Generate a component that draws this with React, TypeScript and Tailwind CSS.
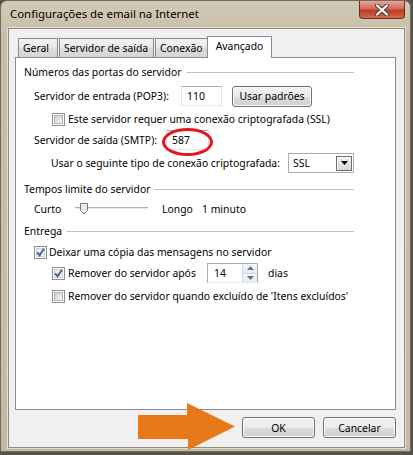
import React from 'react'
import clsx from 'clsx'

const Check = ({ checked = false }: { checked?: boolean }) => (
  <span className="relative flex h-[13px] w-[13px] shrink-0 items-center justify-center border border-[#8e8f8f] bg-white">
    <span
      className={clsx(
        'h-[9px] w-[9px] border',
        checked
          ? 'border-[#c9ced6] bg-[linear-gradient(135deg,#e6e9ee,#fbfbfb)]'
          : 'border-[#aeb3b9] bg-[linear-gradient(135deg,#cbcfd5,#f7f7f7)]'
      )}
    />
    {checked && (
      <svg className="absolute left-0 top-0" width="11" height="11" viewBox="0 0 11 11">
        <path d="M2.2 5.4 L4.6 8.3 L8.9 1.8" fill="none" stroke="#4a5f8f" strokeWidth="1.9" />
      </svg>
    )}
  </span>
)

const GroupHeader = ({ title }: { title: string }) => (
  <div className="flex h-[16px] w-[330px] items-center">
    <span>{title}</span>
    <span className="ml-[4px] h-px flex-1 bg-[#bcc3c9]" />
  </div>
)

const TextBox = ({ value, className }: { value: string; className?: string }) => (
  <div
    className={clsx(
      'flex h-[20px] items-center border border-[#abadb3] border-b-[#e3e9ef] border-l-[#e2e3ea] border-r-[#dbdfe6] bg-white',
      className
    )}
  >
    {value}
  </div>
)

const WinButton = ({ children, className }: { children: React.ReactNode; className?: string }) => (
  <div
    className={clsx(
      'flex items-center justify-center rounded-[3px] border border-[#707070] bg-[linear-gradient(#f2f2f2_0%,#ebebeb_50%,#dddddd_51%,#cfcfcf_100%)] shadow-[inset_0_0_0_1px_#fbfbfb]',
      className
    )}
  >
    {children}
  </div>
)

const Tab = ({ label, width, selected }: { label: string; width: string; selected?: boolean }) => (
  <div
    className={clsx(
      'flex items-center border border-b-0 border-[#898c95]',
      width,
      selected
        ? 'relative z-10 -mb-px -ml-[2px] h-[22px] justify-center bg-white pb-[3px]'
        : 'ml-px h-[19px] pl-[4px] bg-[linear-gradient(#f3f3f3,#e6e6e6_50%,#dcdcdc_51%,#d6d6d6)]'
    )}
  >
    {label}
  </div>
)

export default function App() {
  return (
    <div className="relative h-[455px] w-[413px] overflow-hidden whitespace-nowrap bg-[#55524a] font-['Noto_Sans',sans-serif] text-[10.4px] leading-[16px] text-black">
      <div className="flex h-[452px] w-[411px] flex-col rounded-t-[7px] border border-[#6f6b5f] bg-[linear-gradient(#d2cab6,#c6bda7_40px,#c4bba5)]">
        {/* title bar */}
        <div className="flex h-[27px] items-start justify-between">
          <span className="ml-[9px] mt-[4px] text-[11.4px] leading-[18px]">Configurações de email na Internet</span>
          <div className="mr-[5px] flex h-[18px] w-[46px] items-center justify-center rounded-b-[4px] border border-t-0 border-[#6e2b22] bg-[linear-gradient(#e6a79b,#d36a56_45%,#c0391f_55%,#cf6a4f)]">
            <svg width="16" height="12" viewBox="0 0 16 12">
              <path d="M3 1.5 L13 10.5 M13 1.5 L3 10.5" stroke="#4b3b38" strokeWidth="4" strokeLinecap="round" />
              <path d="M3 1.5 L13 10.5 M13 1.5 L3 10.5" stroke="#ffffff" strokeWidth="2.2" strokeLinecap="round" />
            </svg>
          </div>
        </div>

        {/* client area */}
        <div className="ml-[7px] flex h-[420px] w-[397px] flex-col border border-[#8f8a7c] bg-[#f0f0f0] pl-[6px] pt-[7px] shadow-[0_0_0_1px_#e4dfd2]">
          <div className="flex h-[21px] items-end pl-[2px]">
            <Tab label="Geral" width="w-[40px]" />
            <Tab label="Servidor de saída" width="w-[95px]" />
            <Tab label="Conexão" width="w-[54px]" />
            <Tab label="Avançado" width="w-[65px]" selected />
          </div>

          <div className="flex h-[353px] w-[381px] flex-col border border-[#898c95] bg-white pl-[8px]">
            <div className="mt-[6px]">
              <GroupHeader title="Números das portas do servidor" />
            </div>

            <div className="mt-[6px] flex h-[20px] items-center pl-[10px]">
              <span className="w-[147px]">Servidor de entrada (POP3):</span>
              <TextBox value="110" className="w-[41px] pl-[5px]" />
              <WinButton className="ml-[10px] h-[21px] w-[80px]">Usar padrões</WinButton>
            </div>

            <div className="mt-[5px] flex h-[16px] items-center gap-[3px] pl-[28px]">
              <Check />
              <span>Este servidor requer uma conexão criptografada (SSL)</span>
            </div>

            <div className="mt-[3px] flex h-[20px] items-center pl-[10px]">
              <span className="w-[132px]">Servidor de saída (SMTP):</span>
              <TextBox value="587" className="w-[43px] pl-[5px]" />
            </div>

            <div className="mt-[3px] flex h-[20px] w-[330px] items-center justify-between pl-[27px]">
              <span>Usar o seguinte tipo de conexão criptografada:</span>
              <div className="flex h-[20px] w-[66px] items-center justify-between border border-[#abadb3] bg-white pl-[4px] pr-[1px]">
                <span>SSL</span>
                <div className="flex h-[15px] w-[16px] items-center justify-center border border-[#6f6f6f] bg-[linear-gradient(#f0f0f0,#d8d8d8)] shadow-[inset_1px_1px_0_#ffffff]">
                  <svg width="7" height="4" viewBox="0 0 7 4">
                    <path d="M0 0 L7 0 L3.5 4 Z" fill="#000" />
                  </svg>
                </div>
              </div>
            </div>

            <div className="mt-[8px]">
              <GroupHeader title="Tempos limite do servidor" />
            </div>

            <div className="mt-[4px] flex h-[16px] items-center pl-[10px]">
              <span className="w-[41px]">Curto</span>
              <div className="relative h-[16px] w-[73px]">
                <div className="absolute left-0 right-0 top-[6px] h-[3px] border-b border-t border-b-[#ffffff] border-t-[#b0b0b0] bg-[#e7eaea]" />
                <svg className="absolute left-[5px] top-[2px]" width="8" height="12" viewBox="0 0 8 12">
                  <path d="M0.5 0.5 H7.5 V7.5 L4 11 L0.5 7.5 Z" fill="#ececec" stroke="#7a7a7a" />
                </svg>
              </div>
              <span className="ml-[14px] w-[40px]">Longo</span>
              <span>1 minuto</span>
            </div>

            <div className="mt-[6px]">
              <GroupHeader title="Entrega" />
            </div>

            <div className="mt-[5px] flex h-[16px] items-center gap-[2px] pl-[10px]">
              <Check checked />
              <span>Deixar uma cópia das mensagens no servidor</span>
            </div>

            <div className="mt-[3px] flex h-[20px] items-center pl-[28px]">
              <Check checked />
              <span className="ml-[3px] w-[139px]">Remover do servidor após</span>
              <div className="flex h-[20px] w-[51px] items-center justify-between border border-[#abadb3] border-b-[#e3e9ef] bg-white pl-[6px]">
                <span>14</span>
                <div className="flex h-[18px] w-[15px] flex-col border-l border-[#d5dbe3]">
                  <div className="flex flex-1 items-center justify-center border-b border-[#d5dbe3] bg-[linear-gradient(#f6f8fa,#e6ebf1)]">
                    <svg width="7" height="4" viewBox="0 0 7 4">
                      <path d="M0 4 L3.5 0 L7 4 Z" fill="#5f7197" />
                    </svg>
                  </div>
                  <div className="flex flex-1 items-center justify-center bg-[linear-gradient(#f6f8fa,#e6ebf1)]">
                    <svg width="7" height="4" viewBox="0 0 7 4">
                      <path d="M0 0 L7 0 L3.5 4 Z" fill="#5f7197" />
                    </svg>
                  </div>
                </div>
              </div>
              <span className="ml-[10px]">dias</span>
            </div>

            <div className="mt-[5px] flex h-[16px] items-center gap-[3px] pl-[28px]">
              <Check />
              <span>Remover do servidor quando excluído de 'Itens excluídos'</span>
            </div>
          </div>

          <div className="mt-[7px] flex w-[381px] justify-end gap-[8px]">
            <WinButton className="h-[21px] w-[73px] border-[#3c9fdc] bg-[linear-gradient(#eef3f6_0%,#e4eaee_50%,#d6dee3_51%,#cdd6dc_100%)] shadow-[inset_0_0_0_1px_#a8e0f6]">
              OK
            </WinButton>
            <WinButton className="h-[21px] w-[73px]">Cancelar</WinButton>
          </div>
        </div>
      </div>

      {/* annotations */}
      <div className="absolute left-[162px] top-[128px] h-[28px] w-[51px] rounded-[50%] border-[3px] border-[#e3141b]" />
      <svg className="absolute left-[138px] top-[403px]" width="98" height="48" viewBox="0 0 98 48">
        <polygon points="0,12 49,12 49,0 97,23.5 50,47 50,36 0,36" fill="#e8791a" />
      </svg>
    </div>
  )
}
